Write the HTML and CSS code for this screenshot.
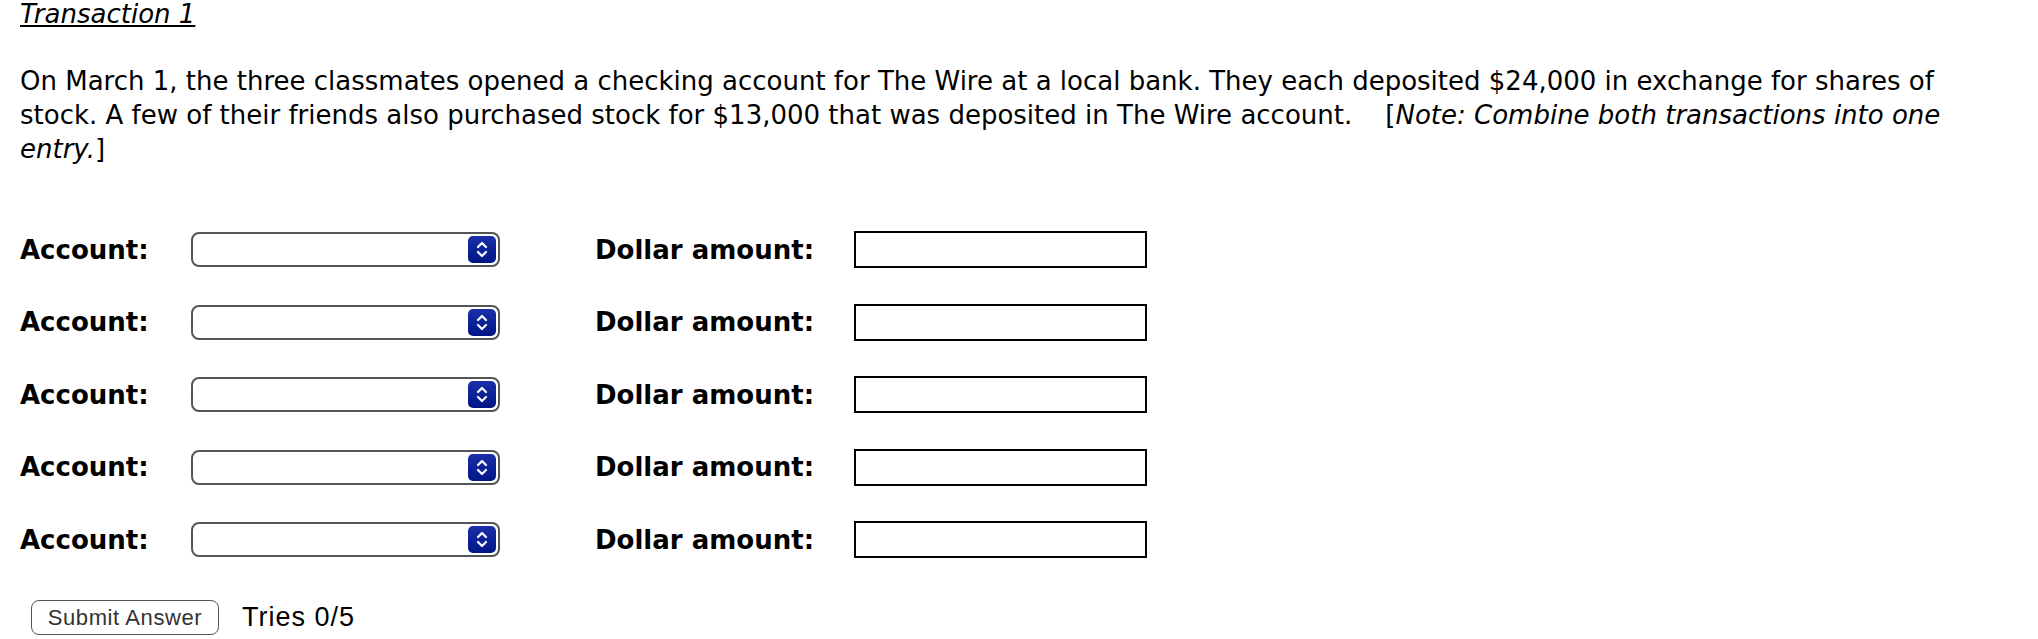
FILE: index.html
```html
<!DOCTYPE html>
<html lang="en">
<head>
    <meta charset="UTF-8">
    <meta name="viewport" content="width=device-width, initial-scale=1.0">
    <title>Transaction 1</title>
    <link rel="stylesheet" href="styles.css">
</head>
<body>
    <h2 class="title">Transaction 1</h2>

    <p class="question">On March 1, the three classmates opened a checking account for The Wire at a local bank. They each deposited $24,000 in exchange for shares of stock. A few of their friends also purchased stock for $13,000 that was deposited in The Wire account. &nbsp;&nbsp;&nbsp;[<em>Note: Combine both transactions into one entry.</em>]</p>

    <div class="entries">
        <div class="entry-row">
            <label class="label account-label">Account:</label>
            <div class="select-box"><span class="select-arrow"><svg viewBox="0 0 28 27" width="28" height="27"><path d="M10 11 L14 7 L18 11 M10 16 L14 20 L18 16" fill="none" stroke="#fff" stroke-width="2.2" stroke-linecap="round" stroke-linejoin="round"/></svg></span></div>
            <label class="label amount-label">Dollar amount:</label>
            <input class="amount" type="text">
        </div>
        <div class="entry-row">
            <label class="label account-label">Account:</label>
            <div class="select-box"><span class="select-arrow"><svg viewBox="0 0 28 27" width="28" height="27"><path d="M10 11 L14 7 L18 11 M10 16 L14 20 L18 16" fill="none" stroke="#fff" stroke-width="2.2" stroke-linecap="round" stroke-linejoin="round"/></svg></span></div>
            <label class="label amount-label">Dollar amount:</label>
            <input class="amount" type="text">
        </div>
        <div class="entry-row">
            <label class="label account-label">Account:</label>
            <div class="select-box"><span class="select-arrow"><svg viewBox="0 0 28 27" width="28" height="27"><path d="M10 11 L14 7 L18 11 M10 16 L14 20 L18 16" fill="none" stroke="#fff" stroke-width="2.2" stroke-linecap="round" stroke-linejoin="round"/></svg></span></div>
            <label class="label amount-label">Dollar amount:</label>
            <input class="amount" type="text">
        </div>
        <div class="entry-row">
            <label class="label account-label">Account:</label>
            <div class="select-box"><span class="select-arrow"><svg viewBox="0 0 28 27" width="28" height="27"><path d="M10 11 L14 7 L18 11 M10 16 L14 20 L18 16" fill="none" stroke="#fff" stroke-width="2.2" stroke-linecap="round" stroke-linejoin="round"/></svg></span></div>
            <label class="label amount-label">Dollar amount:</label>
            <input class="amount" type="text">
        </div>
        <div class="entry-row">
            <label class="label account-label">Account:</label>
            <div class="select-box"><span class="select-arrow"><svg viewBox="0 0 28 27" width="28" height="27"><path d="M10 11 L14 7 L18 11 M10 16 L14 20 L18 16" fill="none" stroke="#fff" stroke-width="2.2" stroke-linecap="round" stroke-linejoin="round"/></svg></span></div>
            <label class="label amount-label">Dollar amount:</label>
            <input class="amount" type="text">
        </div>
    </div>

    <div class="submit-row">
        <button class="submit">Submit Answer</button>
        <span class="tries">Tries 0/5</span>
    </div>
</body>
</html>
```

FILE: styles.css
```css
body {
    font-family: "DejaVu Sans", Verdana, sans-serif;
    font-size: 26px;
    color: #000;
    margin: 0;
    padding: 0 20px;
    background: #fff;
}
.title {
    font-size: 26px;
    font-weight: normal;
    font-style: italic;
    text-decoration: underline;
    margin: 0;
    line-height: 28px;
}
.question {
    margin: 36px 0 0;
    line-height: 34px;
}
.entries {
    margin-top: 65px;
    display: flex;
    flex-direction: column;
    gap: 35.5px;
}
.entry-row {
    display: flex;
    align-items: center;
    height: 37px;
}
.label {
    font-size: 26px;
    font-weight: bold;
}
.account-label {
    width: 171px;
}
.amount-label {
    width: 259px;
}
.select-box {
    width: 303px;
    height: 31px;
    border: 2px solid #555;
    border-radius: 8px;
    margin-right: 95px;
    padding-right: 2px;
    display: flex;
    justify-content: flex-end;
    align-items: center;
}
.select-arrow {
    width: 28px;
    height: 27px;
    border-radius: 5px;
    background: linear-gradient(#1b30a8, #001585);
    display: block;
}
.select-arrow svg {
    display: block;
}
.amount {
    width: 289px;
    height: 33px;
    border: 2px solid #000;
    padding: 0;
    margin: 0;
}
.submit-row {
    margin-top: 42px;
    display: flex;
    align-items: center;
    padding-left: 11px;
}
.submit {
    font-family: "Liberation Sans", Arial, sans-serif;
    font-size: 22px;
    letter-spacing: 0.6px;
    color: #333;
    background: #fff;
    border: 1.5px solid #555;
    border-radius: 8px;
    height: 35px;
    width: 188px;
    padding: 0;
}
.tries {
    font-family: "Liberation Sans", Arial, sans-serif;
    font-size: 27px;
    letter-spacing: 1px;
    margin-left: 23px;
}
```
